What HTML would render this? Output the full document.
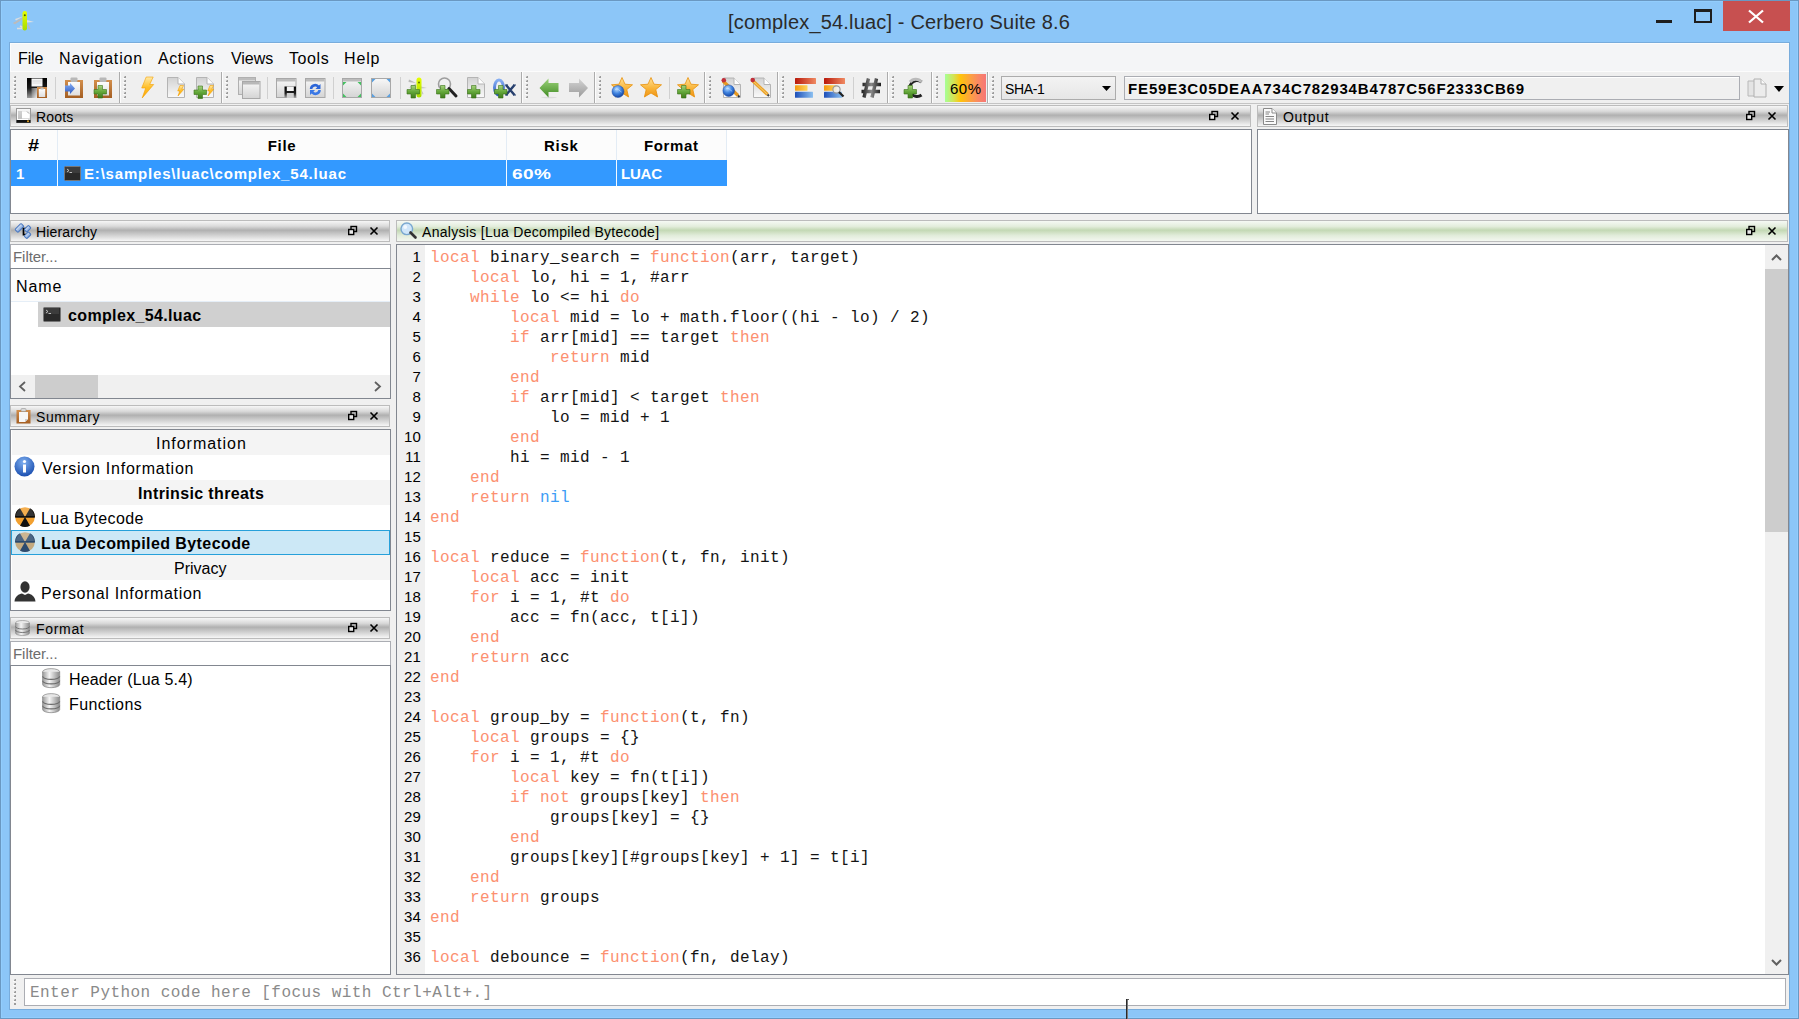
<!DOCTYPE html>
<html><head><meta charset="utf-8"><title>Cerbero Suite</title>
<style>
html,body{margin:0;padding:0;width:1799px;height:1019px;overflow:hidden;background:#8ec7f8;}
body>div,body>svg{position:absolute;box-sizing:border-box;}
body>svg{overflow:visible}
</style></head><body>
<div style="left:0px;top:0px;width:1799px;height:1019px;background:#8cc6f8;border:1px solid #6a98c2;"></div>
<div style="left:1px;top:1px;width:1797px;height:1017px;border:1px solid #92cdfd;"></div>
<div style="left:9px;top:42px;width:1781px;height:968px;border:1px solid #78acdc;"></div>
<div style="top:10px;font-family:'Liberation Sans', sans-serif;font-size:20px;line-height:25px;font-weight:normal;color:#2b2b2b;white-space:pre;letter-spacing:0.172px;;left:728px">[complex_54.luac] - Cerbero Suite 8.6</div>
<div style="left:1723px;top:1px;width:67px;height:30px;background:#c75050;"></div>
<svg style="left:1748px;top:10px;" width="16" height="13" viewBox="0 0 16 13"><path d="M1 0.5 L15 12.5 M15 0.5 L1 12.5" stroke="#fff" stroke-width="2.3"/></svg>
<div style="left:1694px;top:9px;width:18px;height:14px;border:2px solid #1e1e1e;border-top-width:3px;"></div>
<div style="left:1656px;top:20px;width:16px;height:3px;background:#1e1e1e;"></div>
<div style="left:10px;top:43px;width:1779px;height:966px;background:#f0f0f0;"></div>
<div style="left:10px;top:43px;width:1779px;height:28px;background:#f4f5f7;border-top:1px solid #fcfcfc;border-left:1px solid #fcfcfc;"></div>
<div style="left:10px;top:71px;width:1779px;height:1px;background:#fcfcfc;"></div>
<div style="top:49px;font-family:'Liberation Sans', sans-serif;font-size:16px;line-height:20px;font-weight:normal;color:#000;white-space:pre;letter-spacing:-0.13px;;left:18px">File</div>
<div style="top:49px;font-family:'Liberation Sans', sans-serif;font-size:16px;line-height:20px;font-weight:normal;color:#000;white-space:pre;letter-spacing:0.845px;;left:59px">Navigation</div>
<div style="top:49px;font-family:'Liberation Sans', sans-serif;font-size:16px;line-height:20px;font-weight:normal;color:#000;white-space:pre;letter-spacing:0.6px;;left:158px">Actions</div>
<div style="top:49px;font-family:'Liberation Sans', sans-serif;font-size:16px;line-height:20px;font-weight:normal;color:#000;white-space:pre;letter-spacing:-0.05px;;left:231px">Views</div>
<div style="top:49px;font-family:'Liberation Sans', sans-serif;font-size:16px;line-height:20px;font-weight:normal;color:#000;white-space:pre;letter-spacing:0.6px;;left:289px">Tools</div>
<div style="top:49px;font-family:'Liberation Sans', sans-serif;font-size:16px;line-height:20px;font-weight:normal;color:#000;white-space:pre;letter-spacing:0.867px;;left:344px">Help</div>
<div style="left:10px;top:72px;width:1779px;height:31px;background:#efefef;"></div>
<div style="left:10px;top:103px;width:1779px;height:1px;background:#c4c4c4;"></div>
<div style="left:119px;top:72px;width:1px;height:31px;background:#acacac;"></div>
<div style="left:120px;top:72px;width:1px;height:31px;background:#fdfdfd;"></div>
<div style="left:221px;top:72px;width:1px;height:31px;background:#acacac;"></div>
<div style="left:222px;top:72px;width:1px;height:31px;background:#fdfdfd;"></div>
<div style="left:521px;top:72px;width:1px;height:31px;background:#acacac;"></div>
<div style="left:522px;top:72px;width:1px;height:31px;background:#fdfdfd;"></div>
<div style="left:594px;top:72px;width:1px;height:31px;background:#acacac;"></div>
<div style="left:595px;top:72px;width:1px;height:31px;background:#fdfdfd;"></div>
<div style="left:704px;top:72px;width:1px;height:31px;background:#acacac;"></div>
<div style="left:705px;top:72px;width:1px;height:31px;background:#fdfdfd;"></div>
<div style="left:777px;top:72px;width:1px;height:31px;background:#acacac;"></div>
<div style="left:778px;top:72px;width:1px;height:31px;background:#fdfdfd;"></div>
<div style="left:887px;top:72px;width:1px;height:31px;background:#acacac;"></div>
<div style="left:888px;top:72px;width:1px;height:31px;background:#fdfdfd;"></div>
<div style="left:931px;top:72px;width:1px;height:31px;background:#acacac;"></div>
<div style="left:932px;top:72px;width:1px;height:31px;background:#fdfdfd;"></div>
<div style="left:987px;top:72px;width:1px;height:31px;background:#acacac;"></div>
<div style="left:988px;top:72px;width:1px;height:31px;background:#fdfdfd;"></div>
<svg style="left:14px;top:76px;" width="2" height="22" viewBox="0 0 2 22"><rect x="0" y="0" width="2" height="2" fill="#9c9c9c"/><rect x="0" y="0" width="1" height="1" fill="#c8c8c8"/><rect x="-1" y="2" width="2" height="1" fill="#fff" opacity="0.8"/><rect x="0" y="4" width="2" height="2" fill="#9c9c9c"/><rect x="0" y="4" width="1" height="1" fill="#c8c8c8"/><rect x="-1" y="6" width="2" height="1" fill="#fff" opacity="0.8"/><rect x="0" y="8" width="2" height="2" fill="#9c9c9c"/><rect x="0" y="8" width="1" height="1" fill="#c8c8c8"/><rect x="-1" y="10" width="2" height="1" fill="#fff" opacity="0.8"/><rect x="0" y="12" width="2" height="2" fill="#9c9c9c"/><rect x="0" y="12" width="1" height="1" fill="#c8c8c8"/><rect x="-1" y="14" width="2" height="1" fill="#fff" opacity="0.8"/><rect x="0" y="16" width="2" height="2" fill="#9c9c9c"/><rect x="0" y="16" width="1" height="1" fill="#c8c8c8"/><rect x="-1" y="18" width="2" height="1" fill="#fff" opacity="0.8"/><rect x="0" y="20" width="2" height="2" fill="#9c9c9c"/><rect x="0" y="20" width="1" height="1" fill="#c8c8c8"/><rect x="-1" y="22" width="2" height="1" fill="#fff" opacity="0.8"/></svg>
<svg style="left:124px;top:76px;" width="2" height="22" viewBox="0 0 2 22"><rect x="0" y="0" width="2" height="2" fill="#9c9c9c"/><rect x="0" y="0" width="1" height="1" fill="#c8c8c8"/><rect x="-1" y="2" width="2" height="1" fill="#fff" opacity="0.8"/><rect x="0" y="4" width="2" height="2" fill="#9c9c9c"/><rect x="0" y="4" width="1" height="1" fill="#c8c8c8"/><rect x="-1" y="6" width="2" height="1" fill="#fff" opacity="0.8"/><rect x="0" y="8" width="2" height="2" fill="#9c9c9c"/><rect x="0" y="8" width="1" height="1" fill="#c8c8c8"/><rect x="-1" y="10" width="2" height="1" fill="#fff" opacity="0.8"/><rect x="0" y="12" width="2" height="2" fill="#9c9c9c"/><rect x="0" y="12" width="1" height="1" fill="#c8c8c8"/><rect x="-1" y="14" width="2" height="1" fill="#fff" opacity="0.8"/><rect x="0" y="16" width="2" height="2" fill="#9c9c9c"/><rect x="0" y="16" width="1" height="1" fill="#c8c8c8"/><rect x="-1" y="18" width="2" height="1" fill="#fff" opacity="0.8"/><rect x="0" y="20" width="2" height="2" fill="#9c9c9c"/><rect x="0" y="20" width="1" height="1" fill="#c8c8c8"/><rect x="-1" y="22" width="2" height="1" fill="#fff" opacity="0.8"/></svg>
<svg style="left:226px;top:76px;" width="2" height="22" viewBox="0 0 2 22"><rect x="0" y="0" width="2" height="2" fill="#9c9c9c"/><rect x="0" y="0" width="1" height="1" fill="#c8c8c8"/><rect x="-1" y="2" width="2" height="1" fill="#fff" opacity="0.8"/><rect x="0" y="4" width="2" height="2" fill="#9c9c9c"/><rect x="0" y="4" width="1" height="1" fill="#c8c8c8"/><rect x="-1" y="6" width="2" height="1" fill="#fff" opacity="0.8"/><rect x="0" y="8" width="2" height="2" fill="#9c9c9c"/><rect x="0" y="8" width="1" height="1" fill="#c8c8c8"/><rect x="-1" y="10" width="2" height="1" fill="#fff" opacity="0.8"/><rect x="0" y="12" width="2" height="2" fill="#9c9c9c"/><rect x="0" y="12" width="1" height="1" fill="#c8c8c8"/><rect x="-1" y="14" width="2" height="1" fill="#fff" opacity="0.8"/><rect x="0" y="16" width="2" height="2" fill="#9c9c9c"/><rect x="0" y="16" width="1" height="1" fill="#c8c8c8"/><rect x="-1" y="18" width="2" height="1" fill="#fff" opacity="0.8"/><rect x="0" y="20" width="2" height="2" fill="#9c9c9c"/><rect x="0" y="20" width="1" height="1" fill="#c8c8c8"/><rect x="-1" y="22" width="2" height="1" fill="#fff" opacity="0.8"/></svg>
<svg style="left:526px;top:76px;" width="2" height="22" viewBox="0 0 2 22"><rect x="0" y="0" width="2" height="2" fill="#9c9c9c"/><rect x="0" y="0" width="1" height="1" fill="#c8c8c8"/><rect x="-1" y="2" width="2" height="1" fill="#fff" opacity="0.8"/><rect x="0" y="4" width="2" height="2" fill="#9c9c9c"/><rect x="0" y="4" width="1" height="1" fill="#c8c8c8"/><rect x="-1" y="6" width="2" height="1" fill="#fff" opacity="0.8"/><rect x="0" y="8" width="2" height="2" fill="#9c9c9c"/><rect x="0" y="8" width="1" height="1" fill="#c8c8c8"/><rect x="-1" y="10" width="2" height="1" fill="#fff" opacity="0.8"/><rect x="0" y="12" width="2" height="2" fill="#9c9c9c"/><rect x="0" y="12" width="1" height="1" fill="#c8c8c8"/><rect x="-1" y="14" width="2" height="1" fill="#fff" opacity="0.8"/><rect x="0" y="16" width="2" height="2" fill="#9c9c9c"/><rect x="0" y="16" width="1" height="1" fill="#c8c8c8"/><rect x="-1" y="18" width="2" height="1" fill="#fff" opacity="0.8"/><rect x="0" y="20" width="2" height="2" fill="#9c9c9c"/><rect x="0" y="20" width="1" height="1" fill="#c8c8c8"/><rect x="-1" y="22" width="2" height="1" fill="#fff" opacity="0.8"/></svg>
<svg style="left:599px;top:76px;" width="2" height="22" viewBox="0 0 2 22"><rect x="0" y="0" width="2" height="2" fill="#9c9c9c"/><rect x="0" y="0" width="1" height="1" fill="#c8c8c8"/><rect x="-1" y="2" width="2" height="1" fill="#fff" opacity="0.8"/><rect x="0" y="4" width="2" height="2" fill="#9c9c9c"/><rect x="0" y="4" width="1" height="1" fill="#c8c8c8"/><rect x="-1" y="6" width="2" height="1" fill="#fff" opacity="0.8"/><rect x="0" y="8" width="2" height="2" fill="#9c9c9c"/><rect x="0" y="8" width="1" height="1" fill="#c8c8c8"/><rect x="-1" y="10" width="2" height="1" fill="#fff" opacity="0.8"/><rect x="0" y="12" width="2" height="2" fill="#9c9c9c"/><rect x="0" y="12" width="1" height="1" fill="#c8c8c8"/><rect x="-1" y="14" width="2" height="1" fill="#fff" opacity="0.8"/><rect x="0" y="16" width="2" height="2" fill="#9c9c9c"/><rect x="0" y="16" width="1" height="1" fill="#c8c8c8"/><rect x="-1" y="18" width="2" height="1" fill="#fff" opacity="0.8"/><rect x="0" y="20" width="2" height="2" fill="#9c9c9c"/><rect x="0" y="20" width="1" height="1" fill="#c8c8c8"/><rect x="-1" y="22" width="2" height="1" fill="#fff" opacity="0.8"/></svg>
<svg style="left:709px;top:76px;" width="2" height="22" viewBox="0 0 2 22"><rect x="0" y="0" width="2" height="2" fill="#9c9c9c"/><rect x="0" y="0" width="1" height="1" fill="#c8c8c8"/><rect x="-1" y="2" width="2" height="1" fill="#fff" opacity="0.8"/><rect x="0" y="4" width="2" height="2" fill="#9c9c9c"/><rect x="0" y="4" width="1" height="1" fill="#c8c8c8"/><rect x="-1" y="6" width="2" height="1" fill="#fff" opacity="0.8"/><rect x="0" y="8" width="2" height="2" fill="#9c9c9c"/><rect x="0" y="8" width="1" height="1" fill="#c8c8c8"/><rect x="-1" y="10" width="2" height="1" fill="#fff" opacity="0.8"/><rect x="0" y="12" width="2" height="2" fill="#9c9c9c"/><rect x="0" y="12" width="1" height="1" fill="#c8c8c8"/><rect x="-1" y="14" width="2" height="1" fill="#fff" opacity="0.8"/><rect x="0" y="16" width="2" height="2" fill="#9c9c9c"/><rect x="0" y="16" width="1" height="1" fill="#c8c8c8"/><rect x="-1" y="18" width="2" height="1" fill="#fff" opacity="0.8"/><rect x="0" y="20" width="2" height="2" fill="#9c9c9c"/><rect x="0" y="20" width="1" height="1" fill="#c8c8c8"/><rect x="-1" y="22" width="2" height="1" fill="#fff" opacity="0.8"/></svg>
<svg style="left:782px;top:76px;" width="2" height="22" viewBox="0 0 2 22"><rect x="0" y="0" width="2" height="2" fill="#9c9c9c"/><rect x="0" y="0" width="1" height="1" fill="#c8c8c8"/><rect x="-1" y="2" width="2" height="1" fill="#fff" opacity="0.8"/><rect x="0" y="4" width="2" height="2" fill="#9c9c9c"/><rect x="0" y="4" width="1" height="1" fill="#c8c8c8"/><rect x="-1" y="6" width="2" height="1" fill="#fff" opacity="0.8"/><rect x="0" y="8" width="2" height="2" fill="#9c9c9c"/><rect x="0" y="8" width="1" height="1" fill="#c8c8c8"/><rect x="-1" y="10" width="2" height="1" fill="#fff" opacity="0.8"/><rect x="0" y="12" width="2" height="2" fill="#9c9c9c"/><rect x="0" y="12" width="1" height="1" fill="#c8c8c8"/><rect x="-1" y="14" width="2" height="1" fill="#fff" opacity="0.8"/><rect x="0" y="16" width="2" height="2" fill="#9c9c9c"/><rect x="0" y="16" width="1" height="1" fill="#c8c8c8"/><rect x="-1" y="18" width="2" height="1" fill="#fff" opacity="0.8"/><rect x="0" y="20" width="2" height="2" fill="#9c9c9c"/><rect x="0" y="20" width="1" height="1" fill="#c8c8c8"/><rect x="-1" y="22" width="2" height="1" fill="#fff" opacity="0.8"/></svg>
<svg style="left:892px;top:76px;" width="2" height="22" viewBox="0 0 2 22"><rect x="0" y="0" width="2" height="2" fill="#9c9c9c"/><rect x="0" y="0" width="1" height="1" fill="#c8c8c8"/><rect x="-1" y="2" width="2" height="1" fill="#fff" opacity="0.8"/><rect x="0" y="4" width="2" height="2" fill="#9c9c9c"/><rect x="0" y="4" width="1" height="1" fill="#c8c8c8"/><rect x="-1" y="6" width="2" height="1" fill="#fff" opacity="0.8"/><rect x="0" y="8" width="2" height="2" fill="#9c9c9c"/><rect x="0" y="8" width="1" height="1" fill="#c8c8c8"/><rect x="-1" y="10" width="2" height="1" fill="#fff" opacity="0.8"/><rect x="0" y="12" width="2" height="2" fill="#9c9c9c"/><rect x="0" y="12" width="1" height="1" fill="#c8c8c8"/><rect x="-1" y="14" width="2" height="1" fill="#fff" opacity="0.8"/><rect x="0" y="16" width="2" height="2" fill="#9c9c9c"/><rect x="0" y="16" width="1" height="1" fill="#c8c8c8"/><rect x="-1" y="18" width="2" height="1" fill="#fff" opacity="0.8"/><rect x="0" y="20" width="2" height="2" fill="#9c9c9c"/><rect x="0" y="20" width="1" height="1" fill="#c8c8c8"/><rect x="-1" y="22" width="2" height="1" fill="#fff" opacity="0.8"/></svg>
<svg style="left:936px;top:76px;" width="2" height="22" viewBox="0 0 2 22"><rect x="0" y="0" width="2" height="2" fill="#9c9c9c"/><rect x="0" y="0" width="1" height="1" fill="#c8c8c8"/><rect x="-1" y="2" width="2" height="1" fill="#fff" opacity="0.8"/><rect x="0" y="4" width="2" height="2" fill="#9c9c9c"/><rect x="0" y="4" width="1" height="1" fill="#c8c8c8"/><rect x="-1" y="6" width="2" height="1" fill="#fff" opacity="0.8"/><rect x="0" y="8" width="2" height="2" fill="#9c9c9c"/><rect x="0" y="8" width="1" height="1" fill="#c8c8c8"/><rect x="-1" y="10" width="2" height="1" fill="#fff" opacity="0.8"/><rect x="0" y="12" width="2" height="2" fill="#9c9c9c"/><rect x="0" y="12" width="1" height="1" fill="#c8c8c8"/><rect x="-1" y="14" width="2" height="1" fill="#fff" opacity="0.8"/><rect x="0" y="16" width="2" height="2" fill="#9c9c9c"/><rect x="0" y="16" width="1" height="1" fill="#c8c8c8"/><rect x="-1" y="18" width="2" height="1" fill="#fff" opacity="0.8"/><rect x="0" y="20" width="2" height="2" fill="#9c9c9c"/><rect x="0" y="20" width="1" height="1" fill="#c8c8c8"/><rect x="-1" y="22" width="2" height="1" fill="#fff" opacity="0.8"/></svg>
<svg style="left:992px;top:76px;" width="2" height="22" viewBox="0 0 2 22"><rect x="0" y="0" width="2" height="2" fill="#9c9c9c"/><rect x="0" y="0" width="1" height="1" fill="#c8c8c8"/><rect x="-1" y="2" width="2" height="1" fill="#fff" opacity="0.8"/><rect x="0" y="4" width="2" height="2" fill="#9c9c9c"/><rect x="0" y="4" width="1" height="1" fill="#c8c8c8"/><rect x="-1" y="6" width="2" height="1" fill="#fff" opacity="0.8"/><rect x="0" y="8" width="2" height="2" fill="#9c9c9c"/><rect x="0" y="8" width="1" height="1" fill="#c8c8c8"/><rect x="-1" y="10" width="2" height="1" fill="#fff" opacity="0.8"/><rect x="0" y="12" width="2" height="2" fill="#9c9c9c"/><rect x="0" y="12" width="1" height="1" fill="#c8c8c8"/><rect x="-1" y="14" width="2" height="1" fill="#fff" opacity="0.8"/><rect x="0" y="16" width="2" height="2" fill="#9c9c9c"/><rect x="0" y="16" width="1" height="1" fill="#c8c8c8"/><rect x="-1" y="18" width="2" height="1" fill="#fff" opacity="0.8"/><rect x="0" y="20" width="2" height="2" fill="#9c9c9c"/><rect x="0" y="20" width="1" height="1" fill="#c8c8c8"/><rect x="-1" y="22" width="2" height="1" fill="#fff" opacity="0.8"/></svg>
<div style="left:55px;top:77px;width:1px;height:22px;background:#d0d0d0;"></div>
<div style="left:267px;top:77px;width:1px;height:22px;background:#d0d0d0;"></div>
<div style="left:333px;top:77px;width:1px;height:22px;background:#d0d0d0;"></div>
<div style="left:400px;top:77px;width:1px;height:22px;background:#d0d0d0;"></div>
<div style="left:669px;top:77px;width:1px;height:22px;background:#d0d0d0;"></div>
<div style="left:853px;top:77px;width:1px;height:22px;background:#d0d0d0;"></div>
<div style="left:10px;top:105px;width:1241px;height:22px;background:linear-gradient(to bottom,#f6f6f6 0%,#dadada 26%,#b0b0b0 46%,#d2d2d2 72%,#f6f6f6 100%);border:1px solid #bcbcbc;"></div>
<div style="top:108px;font-family:'Liberation Sans', sans-serif;font-size:14px;line-height:18px;font-weight:normal;color:#000;white-space:pre;letter-spacing:0.2px;;left:36px">Roots</div>
<svg style="left:1209px;top:111px;" width="9" height="9" viewBox="0 0 9 9"><rect x="3" y="0.5" width="5.5" height="5" fill="none" stroke="#000" stroke-width="1.4"/><rect x="0.7" y="3.5" width="5" height="5" fill="#e8e8e8" stroke="#000" stroke-width="1.4"/></svg>
<svg style="left:1231px;top:112px;" width="8" height="8" viewBox="0 0 8 8"><path d="M0.5 0.5 L7.5 7.5 M7.5 0.5 L0.5 7.5" stroke="#000" stroke-width="1.6"/></svg>
<div style="left:10px;top:129px;width:1242px;height:85px;background:#fff;border:1px solid #828790;"></div>
<div style="left:11px;top:130px;width:716px;height:30px;background:#fcfcfc;"></div>
<div style="left:57px;top:130px;width:1px;height:30px;background:#e3ecf5;"></div>
<div style="left:506px;top:130px;width:1px;height:30px;background:#e3ecf5;"></div>
<div style="left:616px;top:130px;width:1px;height:30px;background:#e3ecf5;"></div>
<div style="left:726px;top:130px;width:1px;height:30px;background:#e3ecf5;"></div>
<div style="top:136px;font-family:'Liberation Sans', sans-serif;font-size:16px;line-height:20px;font-weight:bold;color:#000;white-space:pre;letter-spacing:0px;transform:scaleX(1.25);transform-origin:0 0;;left:28px">#</div>
<div style="top:136px;font-family:'Liberation Sans', sans-serif;font-size:15px;line-height:19px;font-weight:bold;color:#000;white-space:pre;letter-spacing:0.7px;;left:-318px;width:1200px;text-align:center">File</div>
<div style="top:136px;font-family:'Liberation Sans', sans-serif;font-size:15px;line-height:19px;font-weight:bold;color:#000;white-space:pre;letter-spacing:0.733px;;left:544px">Risk</div>
<div style="top:136px;font-family:'Liberation Sans', sans-serif;font-size:15px;line-height:19px;font-weight:bold;color:#000;white-space:pre;letter-spacing:0.64px;;left:644px">Format</div>
<div style="left:11px;top:160px;width:716px;height:26px;background:#3399ff;"></div>
<div style="left:57px;top:160px;width:1px;height:26px;background:#f4f9ff;"></div>
<div style="left:506px;top:160px;width:1px;height:26px;background:#f4f9ff;"></div>
<div style="left:616px;top:160px;width:1px;height:26px;background:#f4f9ff;"></div>
<div style="top:164px;font-family:'Liberation Sans', sans-serif;font-size:15px;line-height:19px;font-weight:bold;color:#fff;white-space:pre;letter-spacing:0px;;left:16px">1</div>
<div style="top:164px;font-family:'Liberation Sans', sans-serif;font-size:15px;line-height:19px;font-weight:bold;color:#fff;white-space:pre;letter-spacing:0.813px;;left:84px">E:\samples\luac\complex_54.luac</div>
<div style="top:164px;font-family:'Liberation Sans', sans-serif;font-size:15px;line-height:19px;font-weight:bold;color:#fff;white-space:pre;letter-spacing:0.3px;transform:scaleX(1.27);transform-origin:0 0;;left:512px">60%</div>
<div style="top:164px;font-family:'Liberation Sans', sans-serif;font-size:15px;line-height:19px;font-weight:bold;color:#fff;white-space:pre;letter-spacing:-0.2px;;left:621px">LUAC</div>
<div style="left:1257px;top:105px;width:531px;height:22px;background:linear-gradient(to bottom,#f6f6f6 0%,#dadada 26%,#b0b0b0 46%,#d2d2d2 72%,#f6f6f6 100%);border:1px solid #bcbcbc;"></div>
<div style="top:108px;font-family:'Liberation Sans', sans-serif;font-size:14px;line-height:18px;font-weight:normal;color:#000;white-space:pre;letter-spacing:0.72px;;left:1283px">Output</div>
<svg style="left:1746px;top:111px;" width="9" height="9" viewBox="0 0 9 9"><rect x="3" y="0.5" width="5.5" height="5" fill="none" stroke="#000" stroke-width="1.4"/><rect x="0.7" y="3.5" width="5" height="5" fill="#e8e8e8" stroke="#000" stroke-width="1.4"/></svg>
<svg style="left:1768px;top:112px;" width="8" height="8" viewBox="0 0 8 8"><path d="M0.5 0.5 L7.5 7.5 M7.5 0.5 L0.5 7.5" stroke="#000" stroke-width="1.6"/></svg>
<div style="left:1257px;top:129px;width:532px;height:85px;background:#fff;border:1px solid #828790;"></div>
<div style="left:10px;top:220px;width:380px;height:22px;background:linear-gradient(to bottom,#f6f6f6 0%,#dadada 26%,#b0b0b0 46%,#d2d2d2 72%,#f6f6f6 100%);border:1px solid #bcbcbc;"></div>
<div style="top:223px;font-family:'Liberation Sans', sans-serif;font-size:14px;line-height:18px;font-weight:normal;color:#000;white-space:pre;letter-spacing:0.149px;;left:36px">Hierarchy</div>
<svg style="left:348px;top:226px;" width="9" height="9" viewBox="0 0 9 9"><rect x="3" y="0.5" width="5.5" height="5" fill="none" stroke="#000" stroke-width="1.4"/><rect x="0.7" y="3.5" width="5" height="5" fill="#e8e8e8" stroke="#000" stroke-width="1.4"/></svg>
<svg style="left:370px;top:227px;" width="8" height="8" viewBox="0 0 8 8"><path d="M0.5 0.5 L7.5 7.5 M7.5 0.5 L0.5 7.5" stroke="#000" stroke-width="1.6"/></svg>
<div style="left:10px;top:244px;width:381px;height:25px;background:#fff;border:1px solid #abadb3;border-bottom:0;"></div>
<div style="top:247px;font-family:'Liberation Sans', sans-serif;font-size:15px;line-height:19px;font-weight:normal;color:#6d6d6d;white-space:pre;letter-spacing:-0.05px;;left:13px">Filter...</div>
<div style="left:10px;top:268px;width:381px;height:131px;background:#fff;border:1px solid #828790;"></div>
<div style="left:11px;top:269px;width:379px;height:33px;background:#fcfcfc;"></div>
<div style="left:11px;top:301px;width:379px;height:1px;background:#e5eef7;"></div>
<div style="top:277px;font-family:'Liberation Sans', sans-serif;font-size:16px;line-height:20px;font-weight:normal;color:#000;white-space:pre;letter-spacing:0.933px;;left:16px">Name</div>
<div style="left:38px;top:302px;width:352px;height:25px;background:#d0d0d0;"></div>
<div style="top:306px;font-family:'Liberation Sans', sans-serif;font-size:16px;line-height:20px;font-weight:bold;color:#000;white-space:pre;letter-spacing:0.357px;;left:68px">complex_54.luac</div>
<div style="left:11px;top:375px;width:379px;height:23px;background:#f0f0f0;"></div>
<div style="left:35px;top:375px;width:63px;height:23px;background:#cdcdcd;"></div>
<svg style="left:18px;top:381px;" width="9" height="11" viewBox="0 0 9 11"><path d="M7 1 L2 5.5 L7 10" fill="none" stroke="#606060" stroke-width="1.8"/></svg>
<svg style="left:373px;top:381px;" width="9" height="11" viewBox="0 0 9 11"><path d="M2 1 L7 5.5 L2 10" fill="none" stroke="#606060" stroke-width="1.8"/></svg>
<div style="left:10px;top:405px;width:380px;height:22px;background:linear-gradient(to bottom,#f6f6f6 0%,#dadada 26%,#b0b0b0 46%,#d2d2d2 72%,#f6f6f6 100%);border:1px solid #bcbcbc;"></div>
<div style="top:408px;font-family:'Liberation Sans', sans-serif;font-size:14px;line-height:18px;font-weight:normal;color:#000;white-space:pre;letter-spacing:0.6px;;left:36px">Summary</div>
<svg style="left:348px;top:411px;" width="9" height="9" viewBox="0 0 9 9"><rect x="3" y="0.5" width="5.5" height="5" fill="none" stroke="#000" stroke-width="1.4"/><rect x="0.7" y="3.5" width="5" height="5" fill="#e8e8e8" stroke="#000" stroke-width="1.4"/></svg>
<svg style="left:370px;top:412px;" width="8" height="8" viewBox="0 0 8 8"><path d="M0.5 0.5 L7.5 7.5 M7.5 0.5 L0.5 7.5" stroke="#000" stroke-width="1.6"/></svg>
<div style="left:10px;top:429px;width:381px;height:182px;background:#fff;border:1px solid #828790;"></div>
<div style="left:12px;top:430px;width:378px;height:25px;background:#f4f4f4;"></div>
<div style="top:434px;font-family:'Liberation Sans', sans-serif;font-size:16px;line-height:20px;font-weight:normal;color:#000;white-space:pre;letter-spacing:0.98px;;left:156px">Information</div>
<div style="top:459px;font-family:'Liberation Sans', sans-serif;font-size:16px;line-height:20px;font-weight:normal;color:#000;white-space:pre;letter-spacing:0.756px;;left:42px">Version Information</div>
<div style="left:12px;top:480px;width:378px;height:25px;background:#f4f4f4;"></div>
<div style="top:484px;font-family:'Liberation Sans', sans-serif;font-size:16px;line-height:20px;font-weight:bold;color:#000;white-space:pre;letter-spacing:0.362px;;left:138px">Intrinsic threats</div>
<div style="top:509px;font-family:'Liberation Sans', sans-serif;font-size:16px;line-height:20px;font-weight:normal;color:#000;white-space:pre;letter-spacing:0.418px;;left:41px">Lua Bytecode</div>
<div style="left:11px;top:530px;width:379px;height:25px;background:#cce8f6;border:1px solid #26a0da;"></div>
<div style="top:534px;font-family:'Liberation Sans', sans-serif;font-size:16px;line-height:20px;font-weight:bold;color:#000;white-space:pre;letter-spacing:0.418px;;left:41px">Lua Decompiled Bytecode</div>
<div style="left:12px;top:555px;width:378px;height:25px;background:#f4f4f4;"></div>
<div style="top:559px;font-family:'Liberation Sans', sans-serif;font-size:16px;line-height:20px;font-weight:normal;color:#000;white-space:pre;letter-spacing:0.0px;;left:174px">Privacy</div>
<div style="top:584px;font-family:'Liberation Sans', sans-serif;font-size:16px;line-height:20px;font-weight:normal;color:#000;white-space:pre;letter-spacing:0.674px;;left:41px">Personal Information</div>
<div style="left:10px;top:617px;width:380px;height:22px;background:linear-gradient(to bottom,#f6f6f6 0%,#dadada 26%,#b0b0b0 46%,#d2d2d2 72%,#f6f6f6 100%);border:1px solid #bcbcbc;"></div>
<div style="top:620px;font-family:'Liberation Sans', sans-serif;font-size:14px;line-height:18px;font-weight:normal;color:#000;white-space:pre;letter-spacing:0.68px;;left:36px">Format</div>
<svg style="left:348px;top:623px;" width="9" height="9" viewBox="0 0 9 9"><rect x="3" y="0.5" width="5.5" height="5" fill="none" stroke="#000" stroke-width="1.4"/><rect x="0.7" y="3.5" width="5" height="5" fill="#e8e8e8" stroke="#000" stroke-width="1.4"/></svg>
<svg style="left:370px;top:624px;" width="8" height="8" viewBox="0 0 8 8"><path d="M0.5 0.5 L7.5 7.5 M7.5 0.5 L0.5 7.5" stroke="#000" stroke-width="1.6"/></svg>
<div style="left:10px;top:641px;width:381px;height:25px;background:#fff;border:1px solid #abadb3;border-bottom:0;"></div>
<div style="top:644px;font-family:'Liberation Sans', sans-serif;font-size:15px;line-height:19px;font-weight:normal;color:#6d6d6d;white-space:pre;letter-spacing:-0.05px;;left:13px">Filter...</div>
<div style="left:10px;top:665px;width:381px;height:310px;background:#fff;border:1px solid #828790;"></div>
<div style="top:670px;font-family:'Liberation Sans', sans-serif;font-size:16px;line-height:20px;font-weight:normal;color:#000;white-space:pre;letter-spacing:0.173px;;left:69px">Header (Lua 5.4)</div>
<div style="top:695px;font-family:'Liberation Sans', sans-serif;font-size:16px;line-height:20px;font-weight:normal;color:#000;white-space:pre;letter-spacing:0.425px;;left:69px">Functions</div>
<div style="left:396px;top:220px;width:1392px;height:22px;background:linear-gradient(to bottom,#f6f9f4 0%,#e3eddc 27%,#c3d8b4 46%,#e1ecda 72%,#f3f7f0 100%);border:1px solid #bcbcbc;"></div>
<div style="top:223px;font-family:'Liberation Sans', sans-serif;font-size:14px;line-height:18px;font-weight:normal;color:#000;white-space:pre;letter-spacing:0.297px;;left:422px">Analysis [Lua Decompiled Bytecode]</div>
<svg style="left:1746px;top:226px;" width="9" height="9" viewBox="0 0 9 9"><rect x="3" y="0.5" width="5.5" height="5" fill="none" stroke="#000" stroke-width="1.4"/><rect x="0.7" y="3.5" width="5" height="5" fill="#e8e8e8" stroke="#000" stroke-width="1.4"/></svg>
<svg style="left:1768px;top:227px;" width="8" height="8" viewBox="0 0 8 8"><path d="M0.5 0.5 L7.5 7.5 M7.5 0.5 L0.5 7.5" stroke="#000" stroke-width="1.6"/></svg>
<div style="left:396px;top:244px;width:1393px;height:731px;background:#fff;border:1px solid #828790;"></div>
<div style="left:397px;top:245px;width:28px;height:729px;background:#f0f0f0;"></div>
<div style="left:1765px;top:245px;width:23px;height:729px;background:#f0f0f0;"></div>
<div style="left:1765px;top:269px;width:23px;height:263px;background:#cdcdcd;"></div>
<svg style="left:1771px;top:254px;" width="11" height="7" viewBox="0 0 11 7"><path d="M1 6 L5.5 1.5 L10 6" fill="none" stroke="#606060" stroke-width="2"/></svg>
<svg style="left:1771px;top:959px;" width="11" height="7" viewBox="0 0 11 7"><path d="M1 1 L5.5 5.5 L10 1" fill="none" stroke="#606060" stroke-width="2"/></svg>
<div style="top:247px;font-family:'Liberation Sans', sans-serif;font-size:15px;line-height:19px;font-weight:normal;color:#000;white-space:pre;letter-spacing:0.2px;;left:-179px;width:600px;text-align:right">1</div>
<div style="top:248px;font-family:'Liberation Mono', monospace;font-size:16px;line-height:20px;font-weight:normal;color:#141414;white-space:pre;letter-spacing:0.4px;;left:430px"><span style="color:#fc9070">local</span> binary_search = <span style="color:#fc9070">function</span>(arr, target)</div>
<div style="top:267px;font-family:'Liberation Sans', sans-serif;font-size:15px;line-height:19px;font-weight:normal;color:#000;white-space:pre;letter-spacing:0.2px;;left:-179px;width:600px;text-align:right">2</div>
<div style="top:268px;font-family:'Liberation Mono', monospace;font-size:16px;line-height:20px;font-weight:normal;color:#141414;white-space:pre;letter-spacing:0.4px;;left:430px">    <span style="color:#fc9070">local</span> lo, hi = 1, #arr</div>
<div style="top:287px;font-family:'Liberation Sans', sans-serif;font-size:15px;line-height:19px;font-weight:normal;color:#000;white-space:pre;letter-spacing:0.2px;;left:-179px;width:600px;text-align:right">3</div>
<div style="top:288px;font-family:'Liberation Mono', monospace;font-size:16px;line-height:20px;font-weight:normal;color:#141414;white-space:pre;letter-spacing:0.4px;;left:430px">    <span style="color:#fc9070">while</span> lo &lt;= hi <span style="color:#fc9070">do</span></div>
<div style="top:307px;font-family:'Liberation Sans', sans-serif;font-size:15px;line-height:19px;font-weight:normal;color:#000;white-space:pre;letter-spacing:0.2px;;left:-179px;width:600px;text-align:right">4</div>
<div style="top:308px;font-family:'Liberation Mono', monospace;font-size:16px;line-height:20px;font-weight:normal;color:#141414;white-space:pre;letter-spacing:0.4px;;left:430px">        <span style="color:#fc9070">local</span> mid = lo + math.floor((hi - lo) / 2)</div>
<div style="top:327px;font-family:'Liberation Sans', sans-serif;font-size:15px;line-height:19px;font-weight:normal;color:#000;white-space:pre;letter-spacing:0.2px;;left:-179px;width:600px;text-align:right">5</div>
<div style="top:328px;font-family:'Liberation Mono', monospace;font-size:16px;line-height:20px;font-weight:normal;color:#141414;white-space:pre;letter-spacing:0.4px;;left:430px">        <span style="color:#fc9070">if</span> arr[mid] == target <span style="color:#fc9070">then</span></div>
<div style="top:347px;font-family:'Liberation Sans', sans-serif;font-size:15px;line-height:19px;font-weight:normal;color:#000;white-space:pre;letter-spacing:0.2px;;left:-179px;width:600px;text-align:right">6</div>
<div style="top:348px;font-family:'Liberation Mono', monospace;font-size:16px;line-height:20px;font-weight:normal;color:#141414;white-space:pre;letter-spacing:0.4px;;left:430px">            <span style="color:#fc9070">return</span> mid</div>
<div style="top:367px;font-family:'Liberation Sans', sans-serif;font-size:15px;line-height:19px;font-weight:normal;color:#000;white-space:pre;letter-spacing:0.2px;;left:-179px;width:600px;text-align:right">7</div>
<div style="top:368px;font-family:'Liberation Mono', monospace;font-size:16px;line-height:20px;font-weight:normal;color:#141414;white-space:pre;letter-spacing:0.4px;;left:430px">        <span style="color:#fc9070">end</span></div>
<div style="top:387px;font-family:'Liberation Sans', sans-serif;font-size:15px;line-height:19px;font-weight:normal;color:#000;white-space:pre;letter-spacing:0.2px;;left:-179px;width:600px;text-align:right">8</div>
<div style="top:388px;font-family:'Liberation Mono', monospace;font-size:16px;line-height:20px;font-weight:normal;color:#141414;white-space:pre;letter-spacing:0.4px;;left:430px">        <span style="color:#fc9070">if</span> arr[mid] &lt; target <span style="color:#fc9070">then</span></div>
<div style="top:407px;font-family:'Liberation Sans', sans-serif;font-size:15px;line-height:19px;font-weight:normal;color:#000;white-space:pre;letter-spacing:0.2px;;left:-179px;width:600px;text-align:right">9</div>
<div style="top:408px;font-family:'Liberation Mono', monospace;font-size:16px;line-height:20px;font-weight:normal;color:#141414;white-space:pre;letter-spacing:0.4px;;left:430px">            lo = mid + 1</div>
<div style="top:427px;font-family:'Liberation Sans', sans-serif;font-size:15px;line-height:19px;font-weight:normal;color:#000;white-space:pre;letter-spacing:0.2px;;left:-179px;width:600px;text-align:right">10</div>
<div style="top:428px;font-family:'Liberation Mono', monospace;font-size:16px;line-height:20px;font-weight:normal;color:#141414;white-space:pre;letter-spacing:0.4px;;left:430px">        <span style="color:#fc9070">end</span></div>
<div style="top:447px;font-family:'Liberation Sans', sans-serif;font-size:15px;line-height:19px;font-weight:normal;color:#000;white-space:pre;letter-spacing:0.2px;;left:-179px;width:600px;text-align:right">11</div>
<div style="top:448px;font-family:'Liberation Mono', monospace;font-size:16px;line-height:20px;font-weight:normal;color:#141414;white-space:pre;letter-spacing:0.4px;;left:430px">        hi = mid - 1</div>
<div style="top:467px;font-family:'Liberation Sans', sans-serif;font-size:15px;line-height:19px;font-weight:normal;color:#000;white-space:pre;letter-spacing:0.2px;;left:-179px;width:600px;text-align:right">12</div>
<div style="top:468px;font-family:'Liberation Mono', monospace;font-size:16px;line-height:20px;font-weight:normal;color:#141414;white-space:pre;letter-spacing:0.4px;;left:430px">    <span style="color:#fc9070">end</span></div>
<div style="top:487px;font-family:'Liberation Sans', sans-serif;font-size:15px;line-height:19px;font-weight:normal;color:#000;white-space:pre;letter-spacing:0.2px;;left:-179px;width:600px;text-align:right">13</div>
<div style="top:488px;font-family:'Liberation Mono', monospace;font-size:16px;line-height:20px;font-weight:normal;color:#141414;white-space:pre;letter-spacing:0.4px;;left:430px">    <span style="color:#fc9070">return</span> <span style="color:#3d9df5">nil</span></div>
<div style="top:507px;font-family:'Liberation Sans', sans-serif;font-size:15px;line-height:19px;font-weight:normal;color:#000;white-space:pre;letter-spacing:0.2px;;left:-179px;width:600px;text-align:right">14</div>
<div style="top:508px;font-family:'Liberation Mono', monospace;font-size:16px;line-height:20px;font-weight:normal;color:#141414;white-space:pre;letter-spacing:0.4px;;left:430px"><span style="color:#fc9070">end</span></div>
<div style="top:527px;font-family:'Liberation Sans', sans-serif;font-size:15px;line-height:19px;font-weight:normal;color:#000;white-space:pre;letter-spacing:0.2px;;left:-179px;width:600px;text-align:right">15</div>
<div style="top:547px;font-family:'Liberation Sans', sans-serif;font-size:15px;line-height:19px;font-weight:normal;color:#000;white-space:pre;letter-spacing:0.2px;;left:-179px;width:600px;text-align:right">16</div>
<div style="top:548px;font-family:'Liberation Mono', monospace;font-size:16px;line-height:20px;font-weight:normal;color:#141414;white-space:pre;letter-spacing:0.4px;;left:430px"><span style="color:#fc9070">local</span> reduce = <span style="color:#fc9070">function</span>(t, fn, init)</div>
<div style="top:567px;font-family:'Liberation Sans', sans-serif;font-size:15px;line-height:19px;font-weight:normal;color:#000;white-space:pre;letter-spacing:0.2px;;left:-179px;width:600px;text-align:right">17</div>
<div style="top:568px;font-family:'Liberation Mono', monospace;font-size:16px;line-height:20px;font-weight:normal;color:#141414;white-space:pre;letter-spacing:0.4px;;left:430px">    <span style="color:#fc9070">local</span> acc = init</div>
<div style="top:587px;font-family:'Liberation Sans', sans-serif;font-size:15px;line-height:19px;font-weight:normal;color:#000;white-space:pre;letter-spacing:0.2px;;left:-179px;width:600px;text-align:right">18</div>
<div style="top:588px;font-family:'Liberation Mono', monospace;font-size:16px;line-height:20px;font-weight:normal;color:#141414;white-space:pre;letter-spacing:0.4px;;left:430px">    <span style="color:#fc9070">for</span> i = 1, #t <span style="color:#fc9070">do</span></div>
<div style="top:607px;font-family:'Liberation Sans', sans-serif;font-size:15px;line-height:19px;font-weight:normal;color:#000;white-space:pre;letter-spacing:0.2px;;left:-179px;width:600px;text-align:right">19</div>
<div style="top:608px;font-family:'Liberation Mono', monospace;font-size:16px;line-height:20px;font-weight:normal;color:#141414;white-space:pre;letter-spacing:0.4px;;left:430px">        acc = fn(acc, t[i])</div>
<div style="top:627px;font-family:'Liberation Sans', sans-serif;font-size:15px;line-height:19px;font-weight:normal;color:#000;white-space:pre;letter-spacing:0.2px;;left:-179px;width:600px;text-align:right">20</div>
<div style="top:628px;font-family:'Liberation Mono', monospace;font-size:16px;line-height:20px;font-weight:normal;color:#141414;white-space:pre;letter-spacing:0.4px;;left:430px">    <span style="color:#fc9070">end</span></div>
<div style="top:647px;font-family:'Liberation Sans', sans-serif;font-size:15px;line-height:19px;font-weight:normal;color:#000;white-space:pre;letter-spacing:0.2px;;left:-179px;width:600px;text-align:right">21</div>
<div style="top:648px;font-family:'Liberation Mono', monospace;font-size:16px;line-height:20px;font-weight:normal;color:#141414;white-space:pre;letter-spacing:0.4px;;left:430px">    <span style="color:#fc9070">return</span> acc</div>
<div style="top:667px;font-family:'Liberation Sans', sans-serif;font-size:15px;line-height:19px;font-weight:normal;color:#000;white-space:pre;letter-spacing:0.2px;;left:-179px;width:600px;text-align:right">22</div>
<div style="top:668px;font-family:'Liberation Mono', monospace;font-size:16px;line-height:20px;font-weight:normal;color:#141414;white-space:pre;letter-spacing:0.4px;;left:430px"><span style="color:#fc9070">end</span></div>
<div style="top:687px;font-family:'Liberation Sans', sans-serif;font-size:15px;line-height:19px;font-weight:normal;color:#000;white-space:pre;letter-spacing:0.2px;;left:-179px;width:600px;text-align:right">23</div>
<div style="top:707px;font-family:'Liberation Sans', sans-serif;font-size:15px;line-height:19px;font-weight:normal;color:#000;white-space:pre;letter-spacing:0.2px;;left:-179px;width:600px;text-align:right">24</div>
<div style="top:708px;font-family:'Liberation Mono', monospace;font-size:16px;line-height:20px;font-weight:normal;color:#141414;white-space:pre;letter-spacing:0.4px;;left:430px"><span style="color:#fc9070">local</span> group_by = <span style="color:#fc9070">function</span>(t, fn)</div>
<div style="top:727px;font-family:'Liberation Sans', sans-serif;font-size:15px;line-height:19px;font-weight:normal;color:#000;white-space:pre;letter-spacing:0.2px;;left:-179px;width:600px;text-align:right">25</div>
<div style="top:728px;font-family:'Liberation Mono', monospace;font-size:16px;line-height:20px;font-weight:normal;color:#141414;white-space:pre;letter-spacing:0.4px;;left:430px">    <span style="color:#fc9070">local</span> groups = {}</div>
<div style="top:747px;font-family:'Liberation Sans', sans-serif;font-size:15px;line-height:19px;font-weight:normal;color:#000;white-space:pre;letter-spacing:0.2px;;left:-179px;width:600px;text-align:right">26</div>
<div style="top:748px;font-family:'Liberation Mono', monospace;font-size:16px;line-height:20px;font-weight:normal;color:#141414;white-space:pre;letter-spacing:0.4px;;left:430px">    <span style="color:#fc9070">for</span> i = 1, #t <span style="color:#fc9070">do</span></div>
<div style="top:767px;font-family:'Liberation Sans', sans-serif;font-size:15px;line-height:19px;font-weight:normal;color:#000;white-space:pre;letter-spacing:0.2px;;left:-179px;width:600px;text-align:right">27</div>
<div style="top:768px;font-family:'Liberation Mono', monospace;font-size:16px;line-height:20px;font-weight:normal;color:#141414;white-space:pre;letter-spacing:0.4px;;left:430px">        <span style="color:#fc9070">local</span> key = fn(t[i])</div>
<div style="top:787px;font-family:'Liberation Sans', sans-serif;font-size:15px;line-height:19px;font-weight:normal;color:#000;white-space:pre;letter-spacing:0.2px;;left:-179px;width:600px;text-align:right">28</div>
<div style="top:788px;font-family:'Liberation Mono', monospace;font-size:16px;line-height:20px;font-weight:normal;color:#141414;white-space:pre;letter-spacing:0.4px;;left:430px">        <span style="color:#fc9070">if</span> <span style="color:#fc9070">not</span> groups[key] <span style="color:#fc9070">then</span></div>
<div style="top:807px;font-family:'Liberation Sans', sans-serif;font-size:15px;line-height:19px;font-weight:normal;color:#000;white-space:pre;letter-spacing:0.2px;;left:-179px;width:600px;text-align:right">29</div>
<div style="top:808px;font-family:'Liberation Mono', monospace;font-size:16px;line-height:20px;font-weight:normal;color:#141414;white-space:pre;letter-spacing:0.4px;;left:430px">            groups[key] = {}</div>
<div style="top:827px;font-family:'Liberation Sans', sans-serif;font-size:15px;line-height:19px;font-weight:normal;color:#000;white-space:pre;letter-spacing:0.2px;;left:-179px;width:600px;text-align:right">30</div>
<div style="top:828px;font-family:'Liberation Mono', monospace;font-size:16px;line-height:20px;font-weight:normal;color:#141414;white-space:pre;letter-spacing:0.4px;;left:430px">        <span style="color:#fc9070">end</span></div>
<div style="top:847px;font-family:'Liberation Sans', sans-serif;font-size:15px;line-height:19px;font-weight:normal;color:#000;white-space:pre;letter-spacing:0.2px;;left:-179px;width:600px;text-align:right">31</div>
<div style="top:848px;font-family:'Liberation Mono', monospace;font-size:16px;line-height:20px;font-weight:normal;color:#141414;white-space:pre;letter-spacing:0.4px;;left:430px">        groups[key][#groups[key] + 1] = t[i]</div>
<div style="top:867px;font-family:'Liberation Sans', sans-serif;font-size:15px;line-height:19px;font-weight:normal;color:#000;white-space:pre;letter-spacing:0.2px;;left:-179px;width:600px;text-align:right">32</div>
<div style="top:868px;font-family:'Liberation Mono', monospace;font-size:16px;line-height:20px;font-weight:normal;color:#141414;white-space:pre;letter-spacing:0.4px;;left:430px">    <span style="color:#fc9070">end</span></div>
<div style="top:887px;font-family:'Liberation Sans', sans-serif;font-size:15px;line-height:19px;font-weight:normal;color:#000;white-space:pre;letter-spacing:0.2px;;left:-179px;width:600px;text-align:right">33</div>
<div style="top:888px;font-family:'Liberation Mono', monospace;font-size:16px;line-height:20px;font-weight:normal;color:#141414;white-space:pre;letter-spacing:0.4px;;left:430px">    <span style="color:#fc9070">return</span> groups</div>
<div style="top:907px;font-family:'Liberation Sans', sans-serif;font-size:15px;line-height:19px;font-weight:normal;color:#000;white-space:pre;letter-spacing:0.2px;;left:-179px;width:600px;text-align:right">34</div>
<div style="top:908px;font-family:'Liberation Mono', monospace;font-size:16px;line-height:20px;font-weight:normal;color:#141414;white-space:pre;letter-spacing:0.4px;;left:430px"><span style="color:#fc9070">end</span></div>
<div style="top:927px;font-family:'Liberation Sans', sans-serif;font-size:15px;line-height:19px;font-weight:normal;color:#000;white-space:pre;letter-spacing:0.2px;;left:-179px;width:600px;text-align:right">35</div>
<div style="top:947px;font-family:'Liberation Sans', sans-serif;font-size:15px;line-height:19px;font-weight:normal;color:#000;white-space:pre;letter-spacing:0.2px;;left:-179px;width:600px;text-align:right">36</div>
<div style="top:948px;font-family:'Liberation Mono', monospace;font-size:16px;line-height:20px;font-weight:normal;color:#141414;white-space:pre;letter-spacing:0.4px;;left:430px"><span style="color:#fc9070">local</span> debounce = <span style="color:#fc9070">function</span>(fn, delay)</div>
<svg style="left:14px;top:979px;" width="2" height="26" viewBox="0 0 2 26"><rect x="0" y="0" width="2" height="2" fill="#9c9c9c"/><rect x="0" y="0" width="1" height="1" fill="#c8c8c8"/><rect x="-1" y="2" width="2" height="1" fill="#fff" opacity="0.8"/><rect x="0" y="4" width="2" height="2" fill="#9c9c9c"/><rect x="0" y="4" width="1" height="1" fill="#c8c8c8"/><rect x="-1" y="6" width="2" height="1" fill="#fff" opacity="0.8"/><rect x="0" y="8" width="2" height="2" fill="#9c9c9c"/><rect x="0" y="8" width="1" height="1" fill="#c8c8c8"/><rect x="-1" y="10" width="2" height="1" fill="#fff" opacity="0.8"/><rect x="0" y="12" width="2" height="2" fill="#9c9c9c"/><rect x="0" y="12" width="1" height="1" fill="#c8c8c8"/><rect x="-1" y="14" width="2" height="1" fill="#fff" opacity="0.8"/><rect x="0" y="16" width="2" height="2" fill="#9c9c9c"/><rect x="0" y="16" width="1" height="1" fill="#c8c8c8"/><rect x="-1" y="18" width="2" height="1" fill="#fff" opacity="0.8"/><rect x="0" y="20" width="2" height="2" fill="#9c9c9c"/><rect x="0" y="20" width="1" height="1" fill="#c8c8c8"/><rect x="-1" y="22" width="2" height="1" fill="#fff" opacity="0.8"/><rect x="0" y="24" width="2" height="2" fill="#9c9c9c"/></svg>
<div style="left:24px;top:978px;width:1762px;height:28px;background:#fff;border:1px solid #abadb3;"></div>
<div style="top:983px;font-family:'Liberation Mono', monospace;font-size:16px;line-height:20px;font-weight:normal;color:#8a8a8a;white-space:pre;letter-spacing:0.454px;;left:30px">Enter Python code here [focus with Ctrl+Alt+.]</div>
<div style="left:945px;top:74px;width:41px;height:28px;background:linear-gradient(to right,#a6ff96 0%,#d6e250 22%,#ffc30c 38%,#fda43c 60%,#f98a62 80%,#f77676 100%);"></div>
<div style="top:79px;font-family:'Liberation Sans', sans-serif;font-size:15px;line-height:19px;font-weight:normal;color:#000;white-space:pre;letter-spacing:0.5px;;left:950px">60%</div>
<div style="left:1001px;top:76px;width:115px;height:24px;background:linear-gradient(to bottom,#f3f3f3,#e6e6e6);border:1px solid #acacac;"></div>
<div style="top:80px;font-family:'Liberation Sans', sans-serif;font-size:14px;line-height:18px;font-weight:normal;color:#000;white-space:pre;letter-spacing:-0.35px;;left:1005px">SHA-1</div>
<svg style="left:1102px;top:86px;" width="9" height="5" viewBox="0 0 9 5"><path d="M0 0 L9 0 L4.5 5 Z" fill="#000"/></svg>
<div style="left:1124px;top:76px;width:616px;height:24px;background:#f0f0f0;border:1px solid #abadb3;"></div>
<div style="left:1125px;top:77px;width:614px;height:1px;background:#fff;"></div>
<div style="top:79px;font-family:'Liberation Sans', sans-serif;font-size:15px;line-height:19px;font-weight:bold;color:#000;white-space:pre;letter-spacing:0.856px;;left:1128px">FE59E3C05DEAA734C782934B4787C56F2333CB69</div>
<svg style="left:1746px;top:77px;" width="22" height="22" viewBox="0 0 22 22"><path d="M2 4 L9 4 L12 7 L12 19 L2 19 Z" fill="#e4e4e4" stroke="#b8b8b8"/><path d="M8 2 L15 2 L20 7 L20 20 L8 20 Z" fill="#ececec" stroke="#b0b0b0"/><path d="M15 2 L15 7 L20 7" fill="#fafafa" stroke="#b0b0b0"/></svg>
<svg style="left:1774px;top:86px;" width="10" height="6" viewBox="0 0 10 6"><path d="M0 0 L10 0 L5 6 Z" fill="#000"/></svg>
<div style="left:1126px;top:999px;width:1px;height:20px;background:#2a2a2a;"></div>
<div style="left:1127px;top:999px;width:1px;height:20px;background:#7a7a7a;"></div>
<div style="left:1127px;top:999px;width:2px;height:1px;background:#555;"></div>
<svg width="0" height="0" style="position:absolute;left:0;top:0"><defs>
<linearGradient id="gBrown" x1="0" y1="0" x2="0" y2="1"><stop offset="0" stop-color="#d38f4c"/><stop offset="1" stop-color="#a45e22"/></linearGradient>
<linearGradient id="gPaper" x1="0" y1="0" x2="0" y2="1"><stop offset="0" stop-color="#fdfdfd"/><stop offset="1" stop-color="#dedede"/></linearGradient>
<linearGradient id="gDoc" x1="0" y1="0" x2="0" y2="1"><stop offset="0" stop-color="#d2d2d2"/><stop offset="1" stop-color="#fafafa"/></linearGradient>
<linearGradient id="gGreen" x1="0" y1="0" x2="0" y2="1"><stop offset="0" stop-color="#a6d27e"/><stop offset="0.5" stop-color="#64a83a"/><stop offset="1" stop-color="#3d7a1a"/></linearGradient>
<linearGradient id="gBlueA" x1="0" y1="0" x2="0" y2="1"><stop offset="0" stop-color="#86aef2"/><stop offset="1" stop-color="#2f5cc4"/></linearGradient>
<linearGradient id="gBolt" x1="0" y1="0" x2="0" y2="1"><stop offset="0" stop-color="#ffe9a6"/><stop offset="0.5" stop-color="#ffbf2a"/><stop offset="1" stop-color="#fda800"/></linearGradient>
<linearGradient id="gStar" x1="0" y1="0" x2="0" y2="1"><stop offset="0" stop-color="#ffe39a"/><stop offset="0.55" stop-color="#f9b53a"/><stop offset="1" stop-color="#ef9314"/></linearGradient>
<radialGradient id="gGlobe" cx="0.4" cy="0.3" r="0.75"><stop offset="0" stop-color="#b8dcff"/><stop offset="0.5" stop-color="#3f83e0"/><stop offset="1" stop-color="#103f9c"/></radialGradient>
<linearGradient id="gWin" x1="0" y1="0" x2="0" y2="1"><stop offset="0" stop-color="#f8f8f8"/><stop offset="1" stop-color="#d4d4d4"/></linearGradient>
<linearGradient id="gFloppy" x1="0" y1="0" x2="1" y2="1"><stop offset="0" stop-color="#000"/><stop offset="0.55" stop-color="#2a2a2a"/><stop offset="1" stop-color="#bdbdbd"/></linearGradient>
<linearGradient id="gRed" x1="0" y1="0" x2="1" y2="0"><stop offset="0" stop-color="#b8180a"/><stop offset="1" stop-color="#f08a62"/></linearGradient>
<linearGradient id="gOrange" x1="0" y1="0" x2="1" y2="0"><stop offset="0" stop-color="#f49a10"/><stop offset="1" stop-color="#fdd45a"/></linearGradient>
<linearGradient id="gBlueBar" x1="0" y1="0" x2="1" y2="0"><stop offset="0" stop-color="#1d4fb8"/><stop offset="1" stop-color="#8cc0f0"/></linearGradient>
<linearGradient id="gHash" x1="0" y1="0" x2="1" y2="0"><stop offset="0" stop-color="#1a1a1a"/><stop offset="0.5" stop-color="#8a8a8a"/><stop offset="1" stop-color="#1a1a1a"/></linearGradient>
<linearGradient id="gGArrow" x1="0" y1="0" x2="0" y2="1"><stop offset="0" stop-color="#9cd27a"/><stop offset="1" stop-color="#3f8a22"/></linearGradient>
<linearGradient id="gGrayArrow" x1="0" y1="0" x2="0" y2="1"><stop offset="0" stop-color="#d4d4d4"/><stop offset="1" stop-color="#9a9a9a"/></linearGradient>
<linearGradient id="gLime" x1="0" y1="0" x2="0" y2="1"><stop offset="0" stop-color="#e6ff00"/><stop offset="1" stop-color="#a8dc00"/></linearGradient>
<linearGradient id="gTitle" x1="0" y1="0" x2="0" y2="1"><stop offset="0" stop-color="#e4e4e4"/><stop offset="1" stop-color="#a8a8a8"/></linearGradient>
</defs></svg>
<svg style="left:27px;top:78px;" width="20" height="20" viewBox="0 0 20 20"><defs><linearGradient id="gFl2" x1="0" y1="0" x2="0" y2="1"><stop offset="0" stop-color="#000"/><stop offset="0.5" stop-color="#1a1a1a"/><stop offset="1" stop-color="#9a9a9a"/></linearGradient><linearGradient id="gFl3" x1="0" y1="0" x2="1" y2="1"><stop offset="0" stop-color="#5a5a5a"/><stop offset="1" stop-color="#f0f0f0"/></linearGradient></defs><path d="M0 0 H20 V10 H10 V20 H0 Z" fill="url(#gFl2)"/><rect x="4.5" y="10" width="5.5" height="10" fill="url(#gFl3)"/><rect x="4.5" y="0.5" width="11" height="8" fill="#f6f6f6"/><rect x="5.5" y="2.5" width="9" height="1" fill="#cfcfcf"/><rect x="5.5" y="4.5" width="9" height="1" fill="#dcdcdc"/><rect x="10" y="9" width="10" height="11" fill="url(#gBrown)"/><rect x="11.8" y="11" width="6.4" height="8" fill="url(#gPaper)"/><rect x="13.5" y="9.5" width="3" height="2" fill="#bbb"/></svg>
<svg style="left:65px;top:77px;" width="18" height="21" viewBox="0 0 18 21"><rect x="0" y="3" width="18" height="18" fill="url(#gBrown)"/><rect x="3" y="5" width="12" height="13.5" fill="url(#gPaper)"/><rect x="5.5" y="0.5" width="7" height="4.5" rx="1" fill="#b8b8b8"/><path d="M0 8.5 H5 V6 L10 11.5 L5 17 V14.5 H0 Z" fill="url(#gBlueA)"/></svg>
<svg style="left:94px;top:77px;" width="19" height="22" viewBox="0 0 19 22"><rect x="0" y="3" width="18" height="18" fill="url(#gBrown)"/><rect x="3" y="5" width="12" height="13.5" fill="url(#gPaper)"/><rect x="5.5" y="0.5" width="7" height="4.5" rx="1" fill="#b8b8b8"/><path d="M4 8.5 h4.5 v4 h4 v4.5 h-4 v4 h-4.5 v-4 h-4 v-4.5 h4 Z" fill="url(#gGreen)" stroke="#3a7418" stroke-width="0.6"/></svg>
<svg style="left:140px;top:77px;" width="15" height="22" viewBox="0 0 15 22"><path transform="translate(0.2,0) scale(1)" d="M6 0 H13 L9.5 7.5 H13.5 L2 21 L5.5 11 H1.5 Z" fill="url(#gBolt)" stroke="#f3a000" stroke-width="0.60"/></svg>
<svg style="left:167px;top:77px;" width="19" height="22" viewBox="0 0 19 22"><path d="M0.5 0.5 H11 L17.5 7 V20.5 H0.5 Z" fill="url(#gDoc)" stroke="#b4b4b4"/><path d="M11 0.5 V7 H17.5" fill="#fff" stroke="#b4b4b4"/><path transform="translate(10,8.5) scale(0.5)" d="M6 0 H13 L9.5 7.5 H13.5 L2 21 L5.5 11 H1.5 Z" fill="url(#gBolt)" stroke="#f3a000" stroke-width="1.20"/></svg>
<svg style="left:194px;top:77px;" width="20" height="22" viewBox="0 0 20 22"><path d="M2.5 0.5 H13 L19.5 7 V20.5 H2.5 Z" fill="url(#gDoc)" stroke="#b4b4b4"/><path d="M13 0.5 V7 H19.5" fill="#fff" stroke="#b4b4b4"/><path transform="translate(13,8.5) scale(0.5)" d="M6 0 H13 L9.5 7.5 H13.5 L2 21 L5.5 11 H1.5 Z" fill="url(#gBolt)" stroke="#f3a000" stroke-width="1.20"/><path d="M4 9 h4.5 v4 h4 v4.5 h-4 v4 h-4.5 v-4 h-4 v-4.5 h4 Z" fill="url(#gGreen)" stroke="#3a7418" stroke-width="0.6"/></svg>
<svg style="left:238px;top:77px;" width="23" height="22" viewBox="0 0 23 22"><rect x="0.5" y="0.5" width="17" height="17" fill="url(#gWin)" stroke="#b0b0b0"/><rect x="1" y="1" width="16" height="2.5" fill="#bdbdbd"/><rect x="4.5" y="4.5" width="17.5" height="17" fill="url(#gWin)" stroke="#a8a8a8"/><rect x="5" y="5" width="16.5" height="2.5" fill="#b8b8b8"/></svg>
<svg style="left:276px;top:78px;" width="21" height="20" viewBox="0 0 21 20"><defs><linearGradient id="gFl4" x1="0" y1="0" x2="0" y2="1"><stop offset="0" stop-color="#000"/><stop offset="0.6" stop-color="#222"/><stop offset="1" stop-color="#aaa"/></linearGradient></defs><rect x="0.5" y="0.5" width="19.5" height="19" fill="url(#gWin)" stroke="#a8a8a8"/><rect x="1" y="1" width="18.5" height="2.5" fill="#bcbcbc"/><path d="M8.5 8.5 H20 V20 H8.5 Z" fill="url(#gFl4)"/><rect x="10.8" y="8.5" width="7" height="4.5" fill="#f4f4f4"/><rect x="10.8" y="15" width="7" height="5" fill="#cfcfcf"/></svg>
<svg style="left:305px;top:78px;" width="21" height="20" viewBox="0 0 21 20"><rect x="0.5" y="0.5" width="19.5" height="19" fill="url(#gWin)" stroke="#a8a8a8"/><rect x="1" y="1" width="18.5" height="2.5" fill="#bcbcbc"/><path d="M4.8 11 A5.3 5.3 0 0 1 14 7.5 L15.5 6 V11 H10.5 L12.2 9.3 A3 3 0 0 0 7.3 11 Z" fill="#2c66d8"/><path d="M15.8 12 A5.3 5.3 0 0 1 6.6 15.5 L5 17 V12 H10 L8.4 13.7 A3 3 0 0 0 13.3 12 Z" fill="#3a78e6"/></svg>
<svg style="left:342px;top:78px;" width="20" height="20" viewBox="0 0 20 20"><rect x="0.5" y="0.5" width="19" height="19" fill="url(#gWin)" stroke="#a8a8a8"/><rect x="1" y="1" width="18" height="2.5" fill="#bcbcbc"/><path d="M1 4 h3.5 l-3.5 3.5 Z M19 4 h-3.5 l3.5 3.5 Z M1 19 h3.5 l-3.5 -3.5 Z M19 19 h-3.5 l3.5 -3.5 Z" fill="#44c060"/></svg>
<svg style="left:371px;top:78px;" width="20" height="20" viewBox="0 0 20 20"><rect x="0.5" y="0.5" width="19" height="19" fill="url(#gWin)" stroke="#a8a8a8"/><path d="M1 1 h3.5 l-3.5 3.5 Z M19 1 h-3.5 l3.5 3.5 Z M1 19 h3.5 l-3.5 -3.5 Z M19 19 h-3.5 l3.5 -3.5 Z" fill="#5aa0e0"/></svg>
<svg style="left:406px;top:77px;" width="22" height="22" viewBox="0 0 22 22"><path d="M10 6 L3 2.5 L2.5 5 Z" fill="#b8b8b8"/><path d="M2 11 L10 6.5 L10 8.5 Z" fill="#c4c4c4"/><path d="M15 9.5 L21 11 L15 11.5 Z" fill="#c8c8c8"/><path d="M15 12 L17.5 17 L16.5 17.5 Z" fill="#bdbdbd"/><rect x="10.5" y="0.5" width="5" height="20" rx="2.5" fill="url(#gLime)"/><circle cx="13" cy="5.5" r="0.9" fill="#556600"/><path d="M5 8.5 h4.5 v4 h4 v4.5 h-4 v4 h-4.5 v-4 h-4 v-4.5 h4 Z" fill="url(#gGreen)" stroke="#3a7418" stroke-width="0.6"/></svg>
<svg style="left:436px;top:77px;" width="22" height="22" viewBox="0 0 22 22"><circle cx="8.5" cy="7" r="6" fill="#f2f2f2" fill-opacity="0.6" stroke="#9e9e9e" stroke-width="1.6"/><path d="M13 11.5 L20 19" stroke="#222" stroke-width="3" stroke-linecap="round"/><path d="M4.5 8.5 h4.5 v4 h4 v4.5 h-4 v4 h-4.5 v-4 h-4 v-4.5 h4 Z" fill="url(#gGreen)" stroke="#3a7418" stroke-width="0.6"/></svg>
<svg style="left:467px;top:77px;" width="19" height="22" viewBox="0 0 19 22"><path d="M0.5 0.5 H11 L17.5 7 V20.5 H0.5 Z" fill="url(#gDoc)" stroke="#b4b4b4"/><path d="M11 0.5 V7 H17.5" fill="#fff" stroke="#b4b4b4"/><path d="M4.5 8.5 h4.5 v4 h4 v4.5 h-4 v4 h-4.5 v-4 h-4 v-4.5 h4 Z" fill="url(#gGreen)" stroke="#3a7418" stroke-width="0.6"/></svg>
<svg style="left:494px;top:79px;" width="23" height="20" viewBox="0 0 23 20"><ellipse cx="5" cy="8.5" rx="4.5" ry="7.5" fill="none" stroke="url(#gBlueA)" stroke-width="3"/><path d="M12 6 L20.5 16 M20.5 6 L12 16" stroke="#27406e" stroke-width="2.4"/><path d="M11 6 h3 M19 6 h3 M11 16 h3 M19 16 h3" stroke="#27406e" stroke-width="1"/><path d="M4.5 6.5 h4.5 v4 h4 v4.5 h-4 v4 h-4.5 v-4 h-4 v-4.5 h4 Z" fill="url(#gGreen)" stroke="#3a7418" stroke-width="0.6"/></svg>
<svg style="left:539px;top:78px;" width="20" height="20" viewBox="0 0 20 20"><path d="M0.5 10 L9.5 0.5 V5 H19.5 V14 H9.5 V19.5 Z" fill="url(#gGArrow)"/><ellipse cx="10" cy="19.5" rx="8" ry="0.8" fill="#000" opacity="0.08"/></svg>
<svg style="left:569px;top:78px;" width="20" height="20" viewBox="0 0 20 20"><path d="M19 10 L10 0.5 V5 H0 V14 H10 V19.5 Z" fill="url(#gGrayArrow)"/></svg>
<svg style="left:611px;top:77px;" width="23" height="22" viewBox="0 0 23 22"><path transform="translate(0,0) scale(1)" d="M11 0.5 L14 7.2 L21.5 7.8 L15.8 12.6 L17.6 20 L11 16 L4.4 20 L6.2 12.6 L0.5 7.8 L8 7.2 Z" fill="url(#gStar)" stroke="#e8900a" stroke-width="0.8"/><circle cx="7" cy="14.5" r="6" fill="url(#gGlobe)" stroke="#1b4aa8" stroke-width="0.5"/><path d="M4.0 12.7 q1.7999999999999998 -1.7999999999999998 3.5999999999999996 0 t3.0 2.4000000000000004" fill="none" stroke="#cfe6ff" stroke-width="0.8" opacity="0.7"/></svg>
<svg style="left:640px;top:77px;" width="23" height="22" viewBox="0 0 23 22"><path transform="translate(0,0) scale(1)" d="M11 0.5 L14 7.2 L21.5 7.8 L15.8 12.6 L17.6 20 L11 16 L4.4 20 L6.2 12.6 L0.5 7.8 L8 7.2 Z" fill="url(#gStar)" stroke="#e8900a" stroke-width="0.8"/></svg>
<svg style="left:677px;top:77px;" width="23" height="22" viewBox="0 0 23 22"><path transform="translate(0,0) scale(1)" d="M11 0.5 L14 7.2 L21.5 7.8 L15.8 12.6 L17.6 20 L11 16 L4.4 20 L6.2 12.6 L0.5 7.8 L8 7.2 Z" fill="url(#gStar)" stroke="#e8900a" stroke-width="0.8"/><path d="M4.5 8.5 h4.5 v4 h4 v4.5 h-4 v4 h-4.5 v-4 h-4 v-4.5 h4 Z" fill="url(#gGreen)" stroke="#3a7418" stroke-width="0.6"/></svg>
<svg style="left:721px;top:77px;" width="21" height="22" viewBox="0 0 21 22"><path d="M2.5 1.0 H13 L19.5 7.5 V20.5 H2.5 Z" fill="url(#gDoc)" stroke="#b4b4b4"/><path d="M13 1.0 V7.5 H19.5" fill="#fff" stroke="#b4b4b4"/><path d="M2 4 L17 18.5" stroke="#e89a20" stroke-width="3.2"/><path d="M17 18.5 L18.5 20" stroke="#333" stroke-width="2"/><circle cx="2.8" cy="3.2" r="2.3" fill="#c0303a"/><circle cx="7.7" cy="13.7" r="5.8" fill="url(#gGlobe)" stroke="#1b4aa8" stroke-width="0.5"/><path d="M4.800000000000001 11.959999999999999 q1.74 -1.74 3.48 0 t2.9 2.32" fill="none" stroke="#cfe6ff" stroke-width="0.8" opacity="0.7"/></svg>
<svg style="left:750px;top:77px;" width="22" height="22" viewBox="0 0 22 22"><path d="M3.5 1.0 H14 L20.5 7.5 V20.5 H3.5 Z" fill="url(#gDoc)" stroke="#b4b4b4"/><path d="M14 1.0 V7.5 H20.5" fill="#fff" stroke="#b4b4b4"/><path d="M2.5 3.5 L17.5 17.5" stroke="#eba22a" stroke-width="3.4"/><path d="M2.5 3.5 L17.5 17.5" stroke="#f8d070" stroke-width="1"/><path d="M17.5 17.5 L19 19" stroke="#444" stroke-width="2"/><circle cx="2.7" cy="3.0" r="2.3" fill="#c0303a"/></svg>
<svg style="left:795px;top:78px;" width="21" height="20" viewBox="0 0 21 20"><rect x="0" y="0" width="21" height="6" rx="0.5" fill="url(#gRed)"/><rect x="0" y="7.3" width="12.5" height="5.5" rx="0.5" fill="url(#gOrange)"/><rect x="0" y="13.8" width="18" height="6" rx="0.5" fill="url(#gBlueBar)"/></svg>
<svg style="left:824px;top:78px;" width="21" height="21" viewBox="0 0 21 21"><rect x="0" y="0" width="21" height="6" rx="0.5" fill="url(#gRed)"/><rect x="0" y="7.3" width="12.5" height="5.5" rx="0.5" fill="url(#gOrange)"/><rect x="0" y="13.8" width="18" height="6" rx="0.5" fill="url(#gBlueBar)"/><circle cx="12.5" cy="11.5" r="3.6" fill="#eee" fill-opacity="0.85" stroke="#999" stroke-width="1.2"/><path d="M15 14 L19.5 18.5" stroke="#222" stroke-width="2.2"/></svg>
<svg style="left:861px;top:78px;" width="21" height="20" viewBox="0 0 21 20"><path d="M7.5 0.5 L3 19.5 M15.5 0.5 L11 19.5 M1.5 6.5 H20 M0.5 13.5 H19" stroke="url(#gHash)" stroke-width="3.4"/></svg>
<svg style="left:904px;top:79px;" width="20" height="21" viewBox="0 0 20 21"><path d="M17.5 3 A7.5 8 0 1 0 17.5 16" fill="none" stroke="#222" stroke-width="3"/><path d="M17.5 3 A7.5 8 0 0 0 6 3" fill="none" stroke="#bbb" stroke-width="3"/><path d="M4 6.5 h4.5 v4 h4 v4.5 h-4 v4 h-4.5 v-4 h-4 v-4.5 h4 Z" fill="url(#gGreen)" stroke="#3a7418" stroke-width="0.6"/></svg>
<svg style="left:16px;top:108px;" width="15" height="15" viewBox="0 0 15 15"><rect x="0.5" y="0.5" width="14" height="14" fill="#d8d8d8" stroke="#9a9a9a"/><rect x="1" y="1" width="13" height="11.5" fill="url(#gWin)"/><path d="M1.5 1.5 V12" stroke="#fafafa" stroke-width="1"/><path d="M3 3 V11 M5 3 V11" stroke="#9a9a9a" stroke-width="1.2" opacity="0.6"/><path d="M6 4 H11 L13.5 6.5 V10 H6 Z" fill="#fff"/><path d="M11 3.5 L13 5.5" stroke="#aaa"/><rect x="0.5" y="12" width="14" height="2.8" fill="#111"/><path d="M2 11.5 H12" stroke="#fff" stroke-width="1"/><circle cx="12" cy="13.3" r="1" fill="#e0a020"/></svg>
<svg width="0" height="0" style="position:absolute"><defs><linearGradient id="gHi" x1="0" y1="0" x2="0" y2="1"><stop offset="0" stop-color="#dce8f8"/><stop offset="1" stop-color="#7aa0d8"/></linearGradient></defs></svg>
<svg style="left:12px;top:220px;" width="20" height="20" viewBox="0 0 20 20"><g transform="rotate(-45 7.4 8)"><rect x="3.2" y="5.9" width="8.6" height="4.2" rx="0.8" fill="url(#gHi)" stroke="#4a78c0" stroke-width="1"/></g><path d="M14 8.5 H11.5 V14.7 H14" fill="none" stroke="#000" stroke-width="1.7"/><g transform="rotate(-45 15.6 8.7)"><rect x="12.6" y="6.8" width="6" height="3.8" rx="0.8" fill="url(#gHi)" stroke="#4a78c0" stroke-width="1"/></g><g transform="rotate(-45 15.6 15.3)"><rect x="12.6" y="13.4" width="6" height="3.8" rx="0.8" fill="url(#gHi)" stroke="#4a78c0" stroke-width="1"/></g></svg>
<svg style="left:16px;top:408px;" width="15" height="16" viewBox="0 0 15 16"><rect x="0.5" y="2" width="14" height="13.5" fill="url(#gBrown)"/><path d="M3 4 H12 V11 L9 14 H3 Z" fill="#f6f6f6"/><path d="M9 14 L12 11 H9 Z" fill="#cfcfcf"/><rect x="5" y="0.5" width="5" height="3" rx="1" fill="#d8d8d8" stroke="#888" stroke-width="0.5"/></svg>
<svg width="0" height="0" style="position:absolute"><defs><linearGradient id="gDbBody" x1="0" y1="0" x2="1" y2="0"><stop offset="0" stop-color="#9a9a9a"/><stop offset="0.4" stop-color="#f4f4f4"/><stop offset="1" stop-color="#8a8a8a"/></linearGradient></defs></svg>
<svg style="left:15px;top:620px;" width="16" height="16" viewBox="0 0 16 16"><ellipse cx="7.5" cy="3" rx="7" ry="2.5" fill="#e8e8e8" stroke="#888" stroke-width="0.6"/><path d="M0.5 3 V13 A7 2.5 0 0 0 14.5 13 V3" fill="url(#gDbBody)" stroke="#888" stroke-width="0.6"/><path d="M0.5 6.5 A7 2.5 0 0 0 14.5 6.5 M0.5 10 A7 2.5 0 0 0 14.5 10" fill="none" stroke="#6a6a6a" stroke-width="0.9"/></svg>
<svg style="left:1263px;top:108px;" width="14" height="17" viewBox="0 0 14 17"><path d="M0.5 0.5 H9 L13.5 5 V16.5 H0.5 Z" fill="#fafafa" stroke="#8a8a8a"/><path d="M9 0.5 V5 H13.5" fill="#fff" stroke="#8a8a8a"/><path d="M2.5 4 H7 M2.5 6 H6 M2.5 8.5 H11 M2.5 11 H11 M2.5 13.5 H11" stroke="#777" stroke-width="0.9"/></svg>
<svg style="left:400px;top:222px;" width="17" height="17" viewBox="0 0 17 17"><circle cx="6.8" cy="6.8" r="5.8" fill="#cfe6fa" stroke="#7aa8d0" stroke-width="1.4"/><circle cx="5.2" cy="5" r="2" fill="#fff" opacity="0.7"/><path d="M10.5 10.5 L15.5 15.5" stroke="#333" stroke-width="2.6" stroke-linecap="round"/></svg>
<svg style="left:64px;top:166px;" width="17" height="15" viewBox="0 0 17 15"><rect x="0.5" y="0.5" width="16" height="14" rx="1" fill="#2a2a2a" stroke="#777"/><rect x="1" y="1" width="15" height="6" fill="#3c3c3c"/><path d="M3 3 L5 4.5 L3 6" fill="none" stroke="#ddd" stroke-width="0.8"/><path d="M5.5 6.5 H8" stroke="#ddd" stroke-width="0.8"/></svg>
<svg style="left:43px;top:307px;" width="18" height="15" viewBox="0 0 18 15"><rect x="0.5" y="0.5" width="17" height="14" rx="1" fill="#2a2a2a" stroke="#777"/><rect x="1" y="1" width="15" height="6" fill="#3c3c3c"/><path d="M3 3 L5 4.5 L3 6" fill="none" stroke="#ddd" stroke-width="0.8"/><path d="M5.5 6.5 H8" stroke="#ddd" stroke-width="0.8"/></svg>
<svg style="left:14px;top:456px;" width="22" height="22" viewBox="0 0 22 22"><defs><radialGradient id="gInfo" cx="0.45" cy="0.3" r="0.7"><stop offset="0" stop-color="#7fb0f0"/><stop offset="1" stop-color="#1b4fb0"/></radialGradient></defs><circle cx="10.5" cy="10.5" r="10" fill="url(#gInfo)"/><circle cx="10.5" cy="5.5" r="1.6" fill="#fff"/><rect x="9" y="8.5" width="3" height="8" fill="#fff"/></svg>
<svg style="left:15px;top:507px;" width="20" height="20" viewBox="0 0 20 20"><circle cx="10" cy="10" r="9.8" fill="#f2a030"/><path d="M10 10 L15 1.34 A10 10 0 0 1 20 10 Z M10 10 L15 18.66 A10 10 0 0 1 5 18.66 Z M10 10 L0 10 A10 10 0 0 1 5 1.34 Z" fill="#111"/><rect x="0.2" y="9.3" width="19.6" height="1.4" fill="#111"/><path d="M1 9 A9 9 0 0 1 19 9 Z" fill="#fff" opacity="0.15"/></svg>
<svg style="left:15px;top:532px;" width="20" height="20" viewBox="0 0 20 20"><circle cx="10" cy="10" r="9.8" fill="#c4aa80"/><path d="M10 10 L15 1.34 A10 10 0 0 1 20 10 Z M10 10 L15 18.66 A10 10 0 0 1 5 18.66 Z M10 10 L0 10 A10 10 0 0 1 5 1.34 Z" fill="#2c4a6e"/><rect x="0.2" y="9.3" width="19.6" height="1.4" fill="#2c4a6e"/><path d="M1 9 A9 9 0 0 1 19 9 Z" fill="#fff" opacity="0.15"/></svg>
<svg style="left:14px;top:581px;" width="22" height="21" viewBox="0 0 22 21"><ellipse cx="11" cy="6" rx="4.6" ry="5.8" fill="#333"/><path d="M0.5 20.5 C1 15 5 13 8 12.5 L11 14 L14 12.5 C17 13 21 15 21.5 20.5 Z" fill="#333"/></svg>
<svg style="left:42px;top:668px;" width="19" height="21" viewBox="0 0 19 21"><g transform="scale(1.22,1.27)"><ellipse cx="7.5" cy="3" rx="7" ry="2.5" fill="#e8e8e8" stroke="#888" stroke-width="0.6"/><path d="M0.5 3 V13 A7 2.5 0 0 0 14.5 13 V3" fill="url(#gDbBody)" stroke="#888" stroke-width="0.6"/><path d="M0.5 6.5 A7 2.5 0 0 0 14.5 6.5 M0.5 10 A7 2.5 0 0 0 14.5 10" fill="none" stroke="#6a6a6a" stroke-width="0.9"/></g></svg>
<svg style="left:42px;top:693px;" width="19" height="21" viewBox="0 0 19 21"><g transform="scale(1.22,1.27)"><ellipse cx="7.5" cy="3" rx="7" ry="2.5" fill="#e8e8e8" stroke="#888" stroke-width="0.6"/><path d="M0.5 3 V13 A7 2.5 0 0 0 14.5 13 V3" fill="url(#gDbBody)" stroke="#888" stroke-width="0.6"/><path d="M0.5 6.5 A7 2.5 0 0 0 14.5 6.5 M0.5 10 A7 2.5 0 0 0 14.5 10" fill="none" stroke="#6a6a6a" stroke-width="0.9"/></g></svg>
<svg style="left:12px;top:10px;" width="24" height="22" viewBox="0 0 24 22"><path d="M12 6 L3 9 L4 10.5 Z" fill="#ddd"/><path d="M12 7.5 L2 13 L3 13.5 Z" fill="#c0c0c0" stroke="#bbb" stroke-width="1.2"/><path d="M15 10 L22 12 L15 12.5 Z" fill="#e0e0e0"/><path d="M15 13 L18 18.5 L17 19 Z" fill="#ccc" stroke="#bbb"/><path d="M8 16 L12 18 M5 18.5 H11" stroke="#ddd" stroke-width="1.5"/><rect x="10.5" y="1" width="4.5" height="19.5" rx="2.2" fill="url(#gLime)"/><circle cx="12.8" cy="5.3" r="1" fill="#4a5a00"/></svg>
</body></html>
